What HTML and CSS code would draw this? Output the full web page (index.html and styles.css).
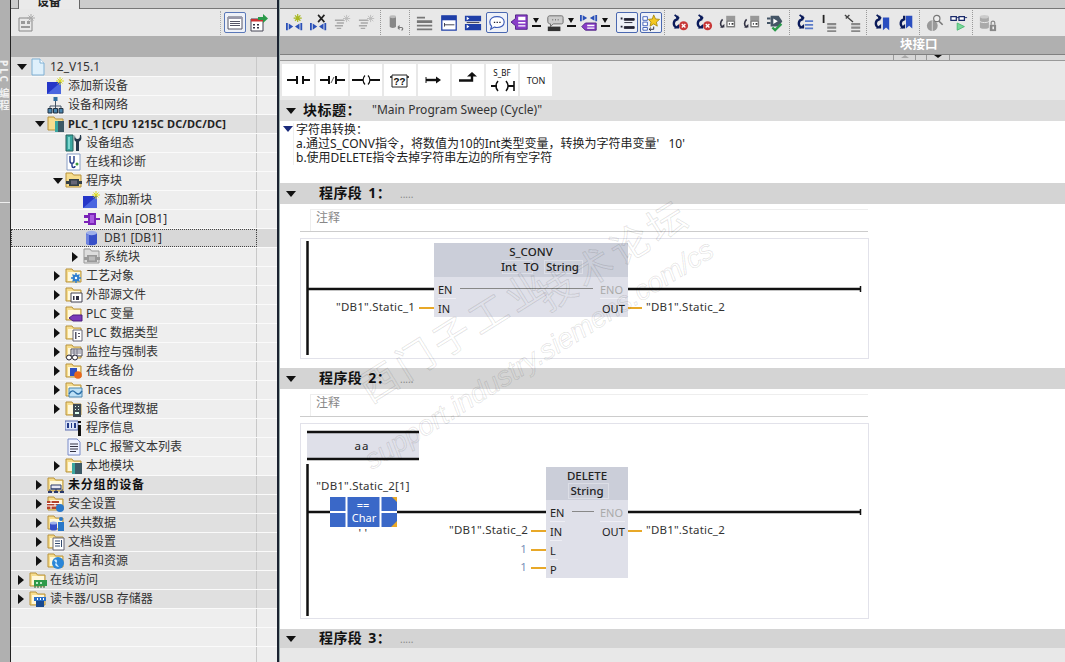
FILE: index.html
```html
<!DOCTYPE html>
<html lang="zh">
<head>
<meta charset="utf-8">
<title>TIA Portal</title>
<link rel="stylesheet" href="styles.css">
</head>
<body>
<svg class="defs" width="0" height="0">
  <!-- tree -->
  <symbol id="folder" viewBox="0 0 18 18"><path d="M1 2h6l1.500 2H16v11H1z" fill="#f6dd8e" stroke="#b8923a"/><path d="M3 5h12v9H3z" fill="#fff8dc"/></symbol>
  <symbol id="doc" viewBox="0 0 18 18"><path d="M3 1h8l4 4v12H3z" fill="#dff0fb" stroke="#7fb0d4"/><path d="M11 1v4h4" fill="#fff" stroke="#7fb0d4"/></symbol>
  <symbol id="newdev" viewBox="0 0 18 18"><path d="M0 5h14v12H0z" fill="#2536c8"/><path d="M0 17L14 5v12z" fill="#4a66e0"/><path d="M13 0v8M9 4h8M10.500 1.500l5 5M15.500 1.500l-5 5" stroke="#d8d820"/></symbol>
  <symbol id="network" viewBox="0 0 18 18"><path d="M6.500 1h4v4h-4z" fill="#2f6f9f"/><path d="M8.500 5v4M3 13v-3h11v3M8.500 9v4" stroke="#456" fill="none"/><path d="M1 12.500h4V17H1zM6.500 12.500h4V17h-4zM12 12.500h4V17h-4z" fill="#4a86b0" stroke="#234"/></symbol>
  <symbol id="plc" viewBox="0 0 18 18"><path d="M1 2h6l1.500 2H16v11H1z" fill="#f6dd8e" stroke="#b8923a"/><path d="M8 6h9v11H8z" fill="#3d5a66"/><path d="M8 6h3v11H8z" fill="#3aa7a0"/></symbol>
  <symbol id="devcfg" viewBox="0 0 18 18"><path d="M1 1h7v16H1z" fill="#3aa7a0" stroke="#24605c"/><path d="M3 3h2v12H3z" fill="#7fd8d0"/><path d="M10 1c0 3 1 4 2.500 4S15 4 15 1l1 0c1 4 0 6-2 6.500V17h-3V7.500C9 7 9 4 10 1z" fill="#24384a"/></symbol>
  <symbol id="diag" viewBox="0 0 18 18"><path d="M2 1h13v16H2z" fill="#fff" stroke="#8aa0c8"/><path d="M5 3v5c0 3 4 3 4 0V3M7 11v2c0 2 3 2 3 0" fill="none" stroke="#223a88" stroke-width="1.400"/><circle cx="12" cy="11" r="1.500" fill="#3a9a3a"/></symbol>
  <symbol id="blocks" viewBox="0 0 18 18"><path d="M1 1h6l1.500 2H16v12H1z" fill="#f6dd8e" stroke="#b8923a"/><path d="M1 9h3V7h10v2h3v3h-3v2H4v-2H1z" fill="#333f48"/><path d="M6 8.500h6v4H6z" fill="#667"/></symbol>
  <symbol id="sysblocks" viewBox="0 0 18 18"><path d="M1 1h6l1.500 2H16v12H1z" fill="#ddd" stroke="#999"/><path d="M1 9h3V7h10v2h3v3h-3v2H4v-2H1z" fill="#999"/><path d="M6 8.500h6v4H6z" fill="#bbb"/></symbol>
  <symbol id="ob" viewBox="0 0 18 18"><path d="M1 5h4V3h8v5h4v2h-4v5H5v-2H1v-2h4V8H1z" fill="#7a22b8"/><path d="M7 5h4v8H7z" fill="#a95be0"/></symbol>
  <symbol id="db" viewBox="0 0 18 18"><path d="M3 4v10c0 3 11 3 11 0V4z" fill="#3850c8"/><ellipse cx="8.500" cy="4" rx="5.500" ry="2.200" fill="#9fb0ea"/><path d="M3 5v9c0 1 1 2 3 2V6z" fill="#6f84e0"/></symbol>
  <symbol id="tech" viewBox="0 0 18 18"><use href="#folder"/><circle cx="11" cy="11" r="3.500" fill="#2f7fd0"/><path d="M11 6v10M6 11h10M7.500 7.500l7 7M14.500 7.500l-7 7" stroke="#2f7fd0" stroke-width="1.400"/><circle cx="11" cy="11" r="1.200" fill="#fff"/></symbol>
  <symbol id="ext" viewBox="0 0 18 18"><use href="#folder"/><path d="M6 7h11v9H6z" fill="#fff" stroke="#445"/><path d="M8 10h1.500v4H8zM11 10h3v4h-3z" fill="#334"/></symbol>
  <symbol id="tags" viewBox="0 0 18 18"><use href="#folder"/><path d="M4 13l4-3h9v6H8z" fill="#7a3ab8" stroke="#4a1f80"/></symbol>
  <symbol id="types" viewBox="0 0 18 18"><use href="#folder"/><path d="M8 6h9v11H8z" fill="#fff" stroke="#667"/><path d="M10 8h1.500v7H10zM13 9h2v1h-2zM13 12h2v1h-2z" fill="#556"/></symbol>
  <symbol id="watch" viewBox="0 0 18 18"><use href="#folder"/><path d="M6 6h11v7H6z" fill="#fff" stroke="#445"/><path d="M7 8h9M7 10h9M9 6v7M12 6v7" stroke="#778"/><circle cx="4" cy="14.500" r="2.500" fill="#fff" stroke="#223"/><circle cx="10" cy="14.500" r="2.500" fill="#fff" stroke="#223"/></symbol>
  <symbol id="backup" viewBox="0 0 18 18"><use href="#folder"/><path d="M5 6h7v8H5z" fill="#2f4fc0"/><circle cx="13" cy="13" r="3.800" fill="#e8671c"/></symbol>
  <symbol id="traces" viewBox="0 0 18 18"><use href="#folder"/><path d="M4 7h13v9H4z" fill="#bde0f5" stroke="#4a86b0"/><path d="M4 13c3-5 5-3 7-1s4 1 6-2" fill="none" stroke="#2c6fa8" stroke-width="1.400"/></symbol>
  <symbol id="proxy" viewBox="0 0 18 18"><use href="#folder"/><path d="M8 4h8v13H8z" fill="#3f4a52"/><path d="M10 6h1v1h-1zM13 6h1v1h-1zM10 9h1v1h-1zM13 9h1v1h-1zM10 12h4v2h-4z" fill="#dfe"/></symbol>
  <symbol id="info" viewBox="0 0 18 18"><path d="M0 2h13v9H0z" fill="#dbe4f8" stroke="#5a6cb0"/><path d="M2 4h2v5H2zM6 4h1v5H6zM9 4h2v5H9z" fill="#223a88"/><path d="M13 2h3v2h-3zM13 6h3v11h-3z" fill="#111"/></symbol>
  <symbol id="list" viewBox="0 0 18 18"><path d="M3 1h9l3 3v13H3z" fill="#eef2ff" stroke="#7a8cc8"/><path d="M5 6h8M5 8.500h8M5 11h8M5 13.500h6" stroke="#334"/></symbol>
  <symbol id="local" viewBox="0 0 18 18"><use href="#folder"/><path d="M7 6h10v11H7z" fill="#3d5a66"/><path d="M7 6h3v11H7z" fill="#3aa7a0"/></symbol>
  <symbol id="ungrouped" viewBox="0 0 18 18"><use href="#folder"/><path d="M4 9h10v4H4z" fill="#e8e8f4" stroke="#2a3a6a"/><path d="M4 13h10M3 13v3M9 13v3M15 13v3" stroke="#2a3a6a"/><path d="M1 15h4v2H1zM7 15h4v2H7zM13 15h4v2h-4z" fill="#2a3a6a"/></symbol>
  <symbol id="security" viewBox="0 0 18 18"><use href="#folder"/><path d="M0 6h12v8H0z" fill="#b5432c"/><path d="M0 8.500h12M0 11h12M4 6v2.500M8 8.500V11M4 11v3" stroke="#fff"/><circle cx="13" cy="13" r="4" fill="#2a78c8"/></symbol>
  <symbol id="common" viewBox="0 0 18 18"><use href="#folder"/><path d="M3 9v6c0 2 7 2 7 0V9z" fill="#3850c8"/><ellipse cx="6.500" cy="9" rx="3.500" ry="1.500" fill="#9fb0ea"/><circle cx="14" cy="5" r="2" fill="#2a78c8"/><path d="M11 8h6v9h-6z" fill="#2a78c8"/></symbol>
  <symbol id="docset" viewBox="0 0 18 18"><use href="#folder"/><path d="M6 5h11v12H6z" fill="#fff" stroke="#667"/><path d="M8 8h5M8 10.500h5M8 13h5M14.500 7v7" stroke="#334a70"/></symbol>
  <symbol id="lang" viewBox="0 0 18 18"><use href="#folder"/><circle cx="11" cy="11" r="6" fill="#2a86d8"/><path d="M7 8c3-2 4 2 2 3s0 4 3 4" fill="#cfeaff"/></symbol>
  <symbol id="online" viewBox="0 0 18 18"><use href="#folder"/><path d="M5 9h13v6H5z" fill="#2f9a4a"/><path d="M6 15v2M9 15v2M12 15v2M15 15v2" stroke="#1f6a30"/><path d="M7 11h2v2H7zM11 11h2v2h-2z" fill="#bfe8c8"/></symbol>
  <symbol id="reader" viewBox="0 0 18 18"><use href="#folder"/><path d="M5 7h12v4H5z" fill="#2a6fc8"/><path d="M7 11h8v6H7z" fill="#1a4a90"/><path d="M8 8h1v2H8zM11 8h1v2h-1zM14 8h1v2h-1z" fill="#fff"/></symbol>
  <symbol id="addgear" viewBox="0 0 18 18"><path d="M1 4h13v13H1z" fill="#e8e8e8" stroke="#888"/><path d="M3 7h4v3H3zM9 7h3v3H9zM3 12h9v2H3z" fill="#999"/><path d="M13 0v8M9 4h8M10.500 1.500l5 5M15.500 1.500l-5 5" stroke="#aaa"/></symbol>
  <symbol id="listview" viewBox="0 0 18 18"><path d="M2 3h14v12H2z" fill="#fff" stroke="#556"/><path d="M2 3h14v2H2z" fill="#99a"/><path d="M4 7.500h10M4 9.500h10M4 11.500h10" stroke="#556"/></symbol>
  <symbol id="export" viewBox="0 0 18 18"><path d="M1 5h12v12H1z" fill="#fff" stroke="#445"/><path d="M1 5h12v2.500H1z" fill="#c33"/><path d="M3 10h2v1.500H3zM7 10h2v1.500H7zM3 13h2v1.500H3zM7 13h2v1.500H7z" fill="#334"/><path d="M8 3h5V0l5 4.500L13 9V6H8z" fill="#2a9a4a"/></symbol>
  <!-- toolbar -->
  <symbol id="kn" viewBox="0 0 20 20"><path d="M1 10v8M17 10v8" stroke="#2a50b8" stroke-width="2"/><path d="M3 10.500l5 3.500-5 3.500zM15 10.500l-5 3.500 5 3.500z" fill="#2a50b8"/></symbol>
  <symbol id="t1" viewBox="0 0 20 20"><use href="#kn"/><path d="M13 0v9M8.500 4.500h9M10 1.500l6 6M16 1.500l-6 6" stroke="#a8b820" stroke-width="1.300"/></symbol>
  <symbol id="t2" viewBox="0 0 20 20"><use href="#kn"/><path d="M9 1l7 8M16 1l-7 8" stroke="#222" stroke-width="1.800"/></symbol>
  <symbol id="t3" viewBox="0 0 20 20"><path d="M1 7h10M3 10h8M1 13h9M3 16h5" stroke="#a8a8a8" stroke-width="1.600"/><path d="M14 1v8M10 5h8M11 2l6 6M17 2l-6 6" stroke="#bbb"/></symbol>
  <symbol id="t5" viewBox="0 0 20 20"><path d="M3 3v11c0 2 7 2 7 0V3z" fill="#888"/><ellipse cx="6.500" cy="3" rx="3.500" ry="1.600" fill="#bbb"/><path d="M12 15h4c2 0 2 3 0 3M12 15l2-2M12 15l2 2" fill="none" stroke="#777" stroke-width="1.300"/></symbol>
  <symbol id="t6" viewBox="0 0 20 20"><path d="M1 3h9v2H1zM1 7h17v3H1zM1 12h17v2H1zM1 16h17v2H1z" fill="#777"/></symbol>
  <symbol id="t7" viewBox="0 0 20 20"><path d="M2 2h16v16H2z" fill="#fff" stroke="#1f3fa8" stroke-width="1.400"/><path d="M2 2h16v5H2z" fill="#1f3fa8"/><path d="M5 12h11M5 10v4" stroke="#334"/></symbol>
  <symbol id="t8" viewBox="0 0 20 20"><path d="M1 2h18v6H1zM1 11h18v7H1z" fill="#1f3fa8"/><path d="M3 9.500h14" stroke="#334"/><path d="M3 3l3 2-3 2zM3 12l3 2-3 2z" fill="#fff"/></symbol>
  <symbol id="t9" viewBox="0 0 20 20"><path d="M2 9c0-4 4-6 8-6s8 2 8 6-4 6-8 6c-1 0-2 0-3-.5L3 17l1-3.500C2.700 12.500 2 11 2 9z" fill="#fff" stroke="#3a5ab8" stroke-width="1.300"/><path d="M6.500 8.500h1.500V10H6.500zM9.500 8.500H11V10H9.500zM12.500 8.500H14V10h-1.500z" fill="#223"/></symbol>
  <symbol id="t10" viewBox="0 0 20 20"><path d="M0 9l5-4V1h13v16H5v-4z" fill="#8a3ec8" stroke="#4a1f80"/><path d="M8 3h8v4H8zM8 9h8v1.500H8zM8 12.500h8V14H8z" fill="#fff"/></symbol>
  <symbol id="t11" viewBox="0 0 20 20"><path d="M4 2h13c2 0 2 1 2 3v4c0 2-1 2-3 2H8l-3 3v-3C3 11 2 10 2 8V4c0-1 1-2 2-2z" fill="#ccc" stroke="#666"/><path d="M2 14h14v5H2z" fill="#333"/><path d="M7 6h1v1H7zM10 6h1v1h-1zM13 6h1v1h-1z" fill="#222"/></symbol>
  <symbol id="t12" viewBox="0 0 20 20"><path d="M1 1v7M18 1v7" stroke="#2a50b8" stroke-width="2"/><path d="M3 1.500l5 3-5 3zM16 1.500l-5 3 5 3z" fill="#2a50b8"/><path d="M2 14l4-4h12v8H6z" fill="#8a3ec8" stroke="#4a1f80"/><path d="M8 12h8v1.500H8zM8 15h8v1.500H8z" fill="#fff"/></symbol>
  <symbol id="t13" viewBox="0 0 20 20"><path d="M3 4h2v2H3zM3 13h2v2H3z" fill="#223"/><path d="M7 5h11v2H7zM7 9.500h9M7 14h11v2H7z" fill="#223" stroke="#223"/></symbol>
  <symbol id="t14" viewBox="0 0 20 20"><path d="M1 3h5v4H1zM1 9h5v4H1zM1 15h5v3H1z" fill="#fff" stroke="#3a5ab8"/><path d="M13 1l2 4.500 4.500.5-3.500 3 1 4.500-4-2.500-4 2.500 1-4.500-3-3 4.500-.5z" fill="#f6c820" stroke="#a88a10"/><path d="M13 14v3H8M10 15l-2 2 2 2" fill="none" stroke="#223"/></symbol>
  <symbol id="cur" viewBox="0 0 20 20"><path d="M7 2v4C2 7 2 13 6 15" fill="none" stroke="#0a1a5a" stroke-width="2.600"/><path d="M3 16h6v-5z" fill="#0a1a5a"/><path d="M4 1l5 4" stroke="#0a1a5a" stroke-width="2"/></symbol>
  <symbol id="t15" viewBox="0 0 20 20"><use href="#cur"/><circle cx="14" cy="13" r="5" fill="#c83838"/><path d="M12 11l4 4M16 11l-4 4" stroke="#fff" stroke-width="1.500"/></symbol>
  <symbol id="t17" viewBox="0 0 20 20"><path d="M4 6C1 9 1 13 4 15" fill="none" stroke="#334" stroke-width="1.800"/><path d="M1 15h5v-4z" fill="#334"/><path d="M8 2h10v13H8z" fill="#999"/><path d="M9 8h8v6H9z" fill="#fff" stroke="#666"/><path d="M11 10h1v2h-1zM14 10h2v2h-2z" fill="#333"/></symbol>
  <symbol id="t19" viewBox="0 0 20 20"><path d="M4 2h9l4 6-4 6H4z" fill="#445566"/><path d="M7 5l5 3-5 3z" fill="#fff"/><path d="M0 5h4M0 10h4" stroke="#445566" stroke-width="2"/><path d="M6 15l3 3 7-7" fill="none" stroke="#2a9a4a" stroke-width="2.600"/></symbol>
  <symbol id="t20" viewBox="0 0 20 20"><use href="#cur"/><path d="M10 7h9v2h-9zM10 11h9v2h-9zM10 15h9v2h-9z" fill="#5a7ac8"/></symbol>
  <symbol id="t21" viewBox="0 0 20 20"><path d="M3 1h2v9H3z" fill="#222"/><path d="M8 10h10v2.500H8zM8 14h10v2.500H8zM8 18h10V20H8z" fill="#888"/></symbol>
  <symbol id="t22" viewBox="0 0 20 20"><path d="M1 1l9 8M2 5l4-4" stroke="#444" stroke-width="1.500"/><path d="M8 10h10v2.500H8zM8 14h10v2.500H8zM8 18h10V20H8z" fill="#888"/></symbol>
  <symbol id="t23" viewBox="0 0 20 20"><use href="#cur"/><path d="M11 4h7v14l-3.500-3L11 18z" fill="#2a4ec0"/></symbol>
  <symbol id="t24" viewBox="0 0 20 20"><path d="M12 2v4c5 1 5 7 1 9" fill="none" transform="matrix(-1 0 0 1 20 0)" stroke="#0a1a5a" stroke-width="2.600"/><path d="M3 16h6v-5z" fill="#0a1a5a"/><path d="M10 2h7v14l-3.500-3L10 16z" fill="#2a4ec0"/></symbol>
  <symbol id="t25" viewBox="0 0 20 20"><circle cx="7" cy="13" r="6" fill="#999"/><path d="M7 7v12" stroke="#ddd"/><circle cx="12" cy="5" r="3.500" fill="#eee" stroke="#777" stroke-width="1.300"/><path d="M14.500 8l4 4" stroke="#777" stroke-width="1.800"/></symbol>
  <symbol id="t26" viewBox="0 0 20 20"><path d="M1 3h6v4H1zM10 3h6v4h-6z" fill="#fff" stroke="#1a2a6a" stroke-width="1.400"/><path d="M7 4h3M16 4h3" stroke="#1a2a6a"/><path d="M8 10l8 4-8 4z" fill="#7ad89a" stroke="#4ab870"/></symbol>
  <symbol id="t27" viewBox="0 0 20 20"><path d="M1 3v12c0 2 10 2 10 0V3z" fill="#aaa"/><ellipse cx="6" cy="3" rx="5" ry="2" fill="#ccc"/><path d="M1 8c0 2 10 2 10 0" fill="none" stroke="#eee"/><path d="M12 12h7v7h-7z" fill="#888"/><path d="M13.500 12V9.500c0-2 4-2 4 0V12" fill="none" stroke="#888" stroke-width="1.300"/><path d="M15 14h1.500v3H15z" fill="#fff"/></symbol>
</svg>

<div class="app">
  <aside class="rail">
    <span class="rail-text">PLC 编程</span>
    <span class="rail-mark"></span>
  </aside>

  <nav class="pane">
    <div class="pane-tabs"><div class="tab">设备</div></div>
    <div class="pane-tool">
      <svg class="ic tool-first"><use href="#addgear"/></svg>
      <span class="grow"></span>
      <span class="dots"></span>
      <span class="active-btn"><svg class="ic"><use href="#listview"/></svg></span>
      <svg class="ic"><use href="#export"/></svg>
    </div>
    <div class="pane-band"></div>
    <ul class="tree">
      <li class="row top l0"><span class="cell"><i class="arrow open"></i><svg class="ic"><use href="#doc"/></svg><span>12_V15.1</span></span></li>
      <li class="row l1"><span class="cell"><i class="arrow none"></i><svg class="ic"><use href="#newdev"/></svg><span>添加新设备</span></span></li>
      <li class="row l1"><span class="cell"><i class="arrow none"></i><svg class="ic"><use href="#network"/></svg><span>设备和网络</span></span></li>
      <li class="row top l1"><span class="cell"><i class="arrow open"></i><svg class="ic"><use href="#plc"/></svg><b class="plc">PLC_1 [CPU 1215C DC/DC/DC]</b></span></li>
      <li class="row l2"><span class="cell"><i class="arrow none"></i><svg class="ic"><use href="#devcfg"/></svg><span>设备组态</span></span></li>
      <li class="row l2"><span class="cell"><i class="arrow none"></i><svg class="ic"><use href="#diag"/></svg><span>在线和诊断</span></span></li>
      <li class="row l2"><span class="cell"><i class="arrow open"></i><svg class="ic"><use href="#blocks"/></svg><span>程序块</span></span></li>
      <li class="row l3"><span class="cell"><i class="arrow none"></i><svg class="ic"><use href="#newdev"/></svg><span>添加新块</span></span></li>
      <li class="row l3"><span class="cell"><i class="arrow none"></i><svg class="ic"><use href="#ob"/></svg><span>Main [OB1]</span></span></li>
      <li class="row l3 selected"><span class="cell"><i class="arrow none"></i><svg class="ic"><use href="#db"/></svg><span>DB1 [DB1]</span></span></li>
      <li class="row l3"><span class="cell"><i class="arrow"></i><svg class="ic"><use href="#sysblocks"/></svg><span>系统块</span></span></li>
      <li class="row l2"><span class="cell"><i class="arrow"></i><svg class="ic"><use href="#tech"/></svg><span>工艺对象</span></span></li>
      <li class="row l2"><span class="cell"><i class="arrow"></i><svg class="ic"><use href="#ext"/></svg><span>外部源文件</span></span></li>
      <li class="row l2"><span class="cell"><i class="arrow"></i><svg class="ic"><use href="#tags"/></svg><span>PLC 变量</span></span></li>
      <li class="row l2"><span class="cell"><i class="arrow"></i><svg class="ic"><use href="#types"/></svg><span>PLC 数据类型</span></span></li>
      <li class="row l2"><span class="cell"><i class="arrow"></i><svg class="ic"><use href="#watch"/></svg><span>监控与强制表</span></span></li>
      <li class="row l2"><span class="cell"><i class="arrow"></i><svg class="ic"><use href="#backup"/></svg><span>在线备份</span></span></li>
      <li class="row l2"><span class="cell"><i class="arrow"></i><svg class="ic"><use href="#traces"/></svg><span>Traces</span></span></li>
      <li class="row l2"><span class="cell"><i class="arrow"></i><svg class="ic"><use href="#proxy"/></svg><span>设备代理数据</span></span></li>
      <li class="row l2"><span class="cell"><i class="arrow none"></i><svg class="ic"><use href="#info"/></svg><span>程序信息</span></span></li>
      <li class="row l2"><span class="cell"><i class="arrow none"></i><svg class="ic"><use href="#list"/></svg><span>PLC 报警文本列表</span></span></li>
      <li class="row l2"><span class="cell"><i class="arrow"></i><svg class="ic"><use href="#local"/></svg><span>本地模块</span></span></li>
      <li class="row top l1"><span class="cell"><i class="arrow"></i><svg class="ic"><use href="#ungrouped"/></svg><b>未分组的设备</b></span></li>
      <li class="row top l1"><span class="cell"><i class="arrow"></i><svg class="ic"><use href="#security"/></svg><span>安全设置</span></span></li>
      <li class="row top l1"><span class="cell"><i class="arrow"></i><svg class="ic"><use href="#common"/></svg><span>公共数据</span></span></li>
      <li class="row top l1"><span class="cell"><i class="arrow"></i><svg class="ic"><use href="#docset"/></svg><span>文档设置</span></span></li>
      <li class="row top l1"><span class="cell"><i class="arrow"></i><svg class="ic"><use href="#lang"/></svg><span>语言和资源</span></span></li>
      <li class="row top l0"><span class="cell"><i class="arrow"></i><svg class="ic"><use href="#online"/></svg><span>在线访问</span></span></li>
      <li class="row top l0"><span class="cell"><i class="arrow"></i><svg class="ic"><use href="#reader"/></svg><span>读卡器/USB 存储器</span></span></li>
      <li class="row"><span class="cell"></span></li>
      <li class="row"><span class="cell"></span></li>
      <li class="row"><span class="cell"></span></li>
    </ul>
  </nav>

  <div class="divider"></div>

  <main class="editor">
    <div class="etop"></div>
    <div class="etool">
      <span class="tb"><svg class="ti"><use href="#t1"/></svg></span>
      <span class="tb"><svg class="ti"><use href="#t2"/></svg></span>
      <span class="tb"><svg class="ti"><use href="#t3"/></svg></span>
      <span class="tb"><svg class="ti"><use href="#t3"/></svg></span>
      <span class="sep"></span>
      <span class="tb"><svg class="ti"><use href="#t5"/></svg></span>
      <span class="sep"></span>
      <span class="tb"><svg class="ti"><use href="#t6"/></svg></span>
      <span class="tb"><svg class="ti"><use href="#t7"/></svg></span>
      <span class="tb"><svg class="ti"><use href="#t8"/></svg></span>
      <span class="tb on"><svg class="ti"><use href="#t9"/></svg></span>
      <span class="tb wide"><svg class="ti"><use href="#t10"/></svg><i class="down"></i></span>
      <span class="tb wide"><svg class="ti"><use href="#t11"/></svg><i class="down"></i></span>
      <span class="tb wide"><svg class="ti"><use href="#t12"/></svg><i class="down"></i></span>
      <span class="tb on after-wide"><svg class="ti"><use href="#t13"/></svg></span>
      <span class="tb on"><svg class="ti"><use href="#t14"/></svg></span>
      <span class="sep"></span>
      <span class="tb"><svg class="ti"><use href="#t15"/></svg></span>
      <span class="tb"><svg class="ti"><use href="#t15"/></svg></span>
      <span class="tb"><svg class="ti"><use href="#t17"/></svg></span>
      <span class="tb"><svg class="ti"><use href="#t17"/></svg></span>
      <span class="tb"><svg class="ti"><use href="#t19"/></svg></span>
      <span class="sep"></span>
      <span class="tb"><svg class="ti"><use href="#t20"/></svg></span>
      <span class="tb"><svg class="ti"><use href="#t21"/></svg></span>
      <span class="tb"><svg class="ti"><use href="#t22"/></svg></span>
      <span class="sep"></span>
      <span class="tb"><svg class="ti"><use href="#t23"/></svg></span>
      <span class="tb"><svg class="ti"><use href="#t24"/></svg></span>
      <span class="sep"></span>
      <span class="tb"><svg class="ti"><use href="#t25"/></svg></span>
      <span class="tb"><svg class="ti"><use href="#t26"/></svg></span>
      <span class="sep"></span>
      <span class="tb"><svg class="ti"><use href="#t27"/></svg></span>
    </div>
    <div class="iface"><span>块接口</span></div>
    <div class="ifsub"><span class="ftab up"></span><span class="ftab dn"></span></div>

    <div class="instr">
      <span class="ins"><svg class="insi" viewBox="0 0 30 30"><path d="M4 15h10M20 15h7" stroke="#111" stroke-width="2" fill="none"/><path d="M14 11v8M20 11v8" stroke="#111" stroke-width="2" fill="none"/></svg></span>
      <span class="ins"><svg class="insi" viewBox="0 0 30 30"><path d="M3 15h9M19 15h9M12 11v8M19 11v8" stroke="#111" stroke-width="2" fill="none"/><path d="M14 18l3-6" stroke="#555"/></svg></span>
      <span class="ins"><svg class="insi" viewBox="0 0 30 30"><path d="M1 15h11M19 15h10" stroke="#111" stroke-width="2"/><path d="M14 10.500c-2.500 2.500-2.500 6.500 0 9M17 10.500c2.500 2.500 2.500 6.500 0 9" stroke="#111" stroke-width="1.200" fill="none"/></svg></span>
      <span class="ins"><svg class="insi" viewBox="0 0 30 30"><path d="M7 10h15v12H7z" fill="#fff" stroke="#222"/><path d="M5 12h2M22 12h2" stroke="#111" stroke-width="1.400"/><text x="14.500" y="20" class="q">??</text></svg></span>
      <span class="ins"><svg class="insi" viewBox="0 0 30 30"><path d="M7 15h11" stroke="#111" stroke-width="2.400"/><path d="M7 12v6" stroke="#111"/><path d="M17 11.500l5 3.500-5 3.500z" fill="#111"/></svg></span>
      <span class="ins"><svg class="insi" viewBox="0 0 30 30"><path d="M6 15.500h13V11" stroke="#111" stroke-width="2.400" fill="none"/><path d="M14 11.500l5-4.500 5 4.500z" fill="#111"/></svg></span>
      <span class="ins"><svg class="insi" viewBox="0 0 30 30"><text x="15" y="11" class="sbf">S_BF</text><path d="M4 21h6M21 21h6" stroke="#111" stroke-width="2"/><path d="M27 16v10" stroke="#111" stroke-width="1.600"/><path d="M11 16c-2.500 3-2.500 7 0 10M19 16c2.500 3 2.500 7 0 10" stroke="#111" stroke-width="1.500" fill="none"/></svg></span>
      <span class="ins"><span class="ton">TON</span></span>
    </div>

    <header class="bt-head">
      <i class="arrow open"></i><b class="bt-title">块标题：</b><span class="bt-name">"Main Program Sweep (Cycle)"</span>
    </header>

    <section class="bt-comment">
      <i class="navy"></i>
      <div class="bt-text">
        <p>字符串转换：</p>
        <p>a.通过S_CONV指令，将数值为10的Int类型变量，转换为字符串变量'&nbsp;&nbsp;&nbsp;10'</p>
        <p>b.使用DELETE指令去掉字符串左边的所有空字符</p>
      </div>
    </section>

    <header class="net-head"><i class="arrow open"></i><b class="net-title">程序段 1：</b><span class="net-dots">.....</span></header>
    <section class="net net1">
      <div class="net-comment"><span>注释</span></div>
      <svg class="lad lad1" viewBox="300 238 569 121">
        <rect x="300.500" y="238.500" width="568" height="120" class="frame"/>
        <path d="M307.500 241v114" class="rail-l"/>
        <path d="M307 289h127M628 289h232" class="power"/>
        <path d="M860.500 286v6" class="tick"/>
        <rect x="434" y="243" width="194" height="34" class="bhead"/>
        <rect x="434" y="277" width="194" height="40" class="bbody"/>
        <rect x="502.500" y="260.500" width="30" height="13" class="tbox"/>
        <rect x="544.500" y="260.500" width="38" height="13" class="tbox"/>
        <text x="531" y="256" class="bname">S_CONV</text>
        <text x="540" y="271" class="bname wide-w">Int TO String</text>
        <text x="438" y="294" class="pin">EN</text>
        <path d="M460 288.500h133" class="thin"/>
        <text x="600" y="294" class="pin off">ENO</text>
        <text x="438" y="313" class="pin">IN</text>
        <text x="602" y="313" class="pin">OUT</text>
        <path d="M438 298.500h18M600 298.500h25" class="pinline"/>
        <path d="M419 308h15M628 308h14" class="wire"/>
        <text x="415" y="311" class="op end">"DB1".Static_1</text>
        <text x="646" y="311" class="op">"DB1".Static_2</text>
      </svg>
    </section>

    <header class="net-head"><i class="arrow open"></i><b class="net-title">程序段 2：</b><span class="net-dots">.....</span></header>
    <section class="net net2">
      <div class="net-comment"><span>注释</span></div>
      <svg class="lad lad2" viewBox="300 423 569 196">
        <rect x="300.500" y="423.500" width="568" height="195" class="frame"/>
        <rect x="307" y="431" width="112" height="29" class="bbody"/>
        <path d="M307 432h112M307 459h112" class="power"/>
        <text x="362" y="450" class="bname spaced">aa</text>
        <path d="M307.500 464v152" class="rail-l"/>
        <path d="M307 512h239M628 512h232" class="power"/>
        <path d="M860.500 509v6" class="tick"/>
        <text x="363" y="490" class="op mid">"DB1".Static_2[1]</text>
        <rect x="330" y="497" width="67" height="30" class="cmp"/>
        <path d="M346.500 497v30M380.500 497v30M330 512h16M381 512h16" class="cmp-line"/>
        <path d="M392 497h5v5zM397 527h-6l6-6z" class="cmp-mark"/>
        <text x="363" y="509" class="cmp-t">==</text>
        <text x="364" y="522" class="cmp-t">Char</text>
        <text x="363" y="537" class="op mid">' '</text>
        <rect x="546" y="467" width="82" height="33" class="bhead"/>
        <rect x="546" y="500" width="82" height="78" class="bbody"/>
        <rect x="568.500" y="483.500" width="40" height="15" class="tbox"/>
        <text x="587" y="480" class="bname">DELETE</text>
        <text x="587" y="495" class="bname">String</text>
        <text x="550" y="517" class="pin">EN</text>
        <path d="M572 511.500h22" class="thin"/>
        <text x="600" y="517" class="pin off">ENO</text>
        <text x="550" y="536" class="pin">IN</text>
        <text x="602" y="536" class="pin">OUT</text>
        <text x="550" y="555" class="pin">L</text>
        <text x="550" y="574" class="pin">P</text>
        <path d="M550 521.500h15M550 540.500h12M550 559.500h8M600 521.500h25" class="pinline"/>
        <path d="M531 531h15M531 550h15M531 568h15M628 531h14" class="wire"/>
        <text x="528" y="534" class="op end">"DB1".Static_2</text>
        <text x="646" y="534" class="op">"DB1".Static_2</text>
        <text x="527" y="553" class="op end num">1</text>
        <text x="527" y="571" class="op end num">1</text>
      </svg>
    </section>

    <header class="net-head short"><i class="arrow open"></i><b class="net-title">程序段 3：</b><span class="net-dots">.....</span></header>
    <div class="editor-rest"></div>

    <svg class="watermark" viewBox="0 0 785 662">
      <text transform="translate(90 404) rotate(-32)" class="wm-cn">西门子工业</text>
      <text transform="translate(268 312) rotate(-32)" class="wm-cn">技术论坛</text>
      <text transform="translate(92 470) rotate(-32)" class="wm-en">support.industry.siemens.com/cs</text>
    </svg>
  </main>
</div>
</body>
</html>
```

FILE: styles.css
```css
* { box-sizing: border-box; }
html, body { margin: 0; padding: 0; height: 100%; overflow: hidden; }
body { font: 12px/1.2 "Noto Sans", "Noto Sans CJK SC", sans-serif; color: #222; background: #e8e8e8; }
.defs { position: absolute; }
.app { display: flex; width: 1065px; height: 662px; overflow: hidden; }

/* left rail */
.rail { width: 11px; flex: none; background: #b0b0b0; border-right: 1px solid #222; padding-top: 60px; display: flex; flex-direction: column; overflow: hidden; }
.rail-text { writing-mode: vertical-rl; color: #f2f2f2; font-size: 10px; font-weight: 700; height: 70px; margin-left: -3px; line-height: 12px; letter-spacing: 2px; }
.rail-mark { height: 1px; background: #eee; margin-top: 72px; }

/* project tree */
.pane { width: 266px; flex: none; background: #eee; display: flex; flex-direction: column; }
.pane-tabs { height: 9px; background: #ccc; border-bottom: 1px solid #777; padding-left: 7px; }
.tab { width: 62px; height: 9px; background: #eaeaea; border: 1px solid #666; border-top: 0; border-bottom: 0; font-size: 12px; font-weight: 700; margin-top: 0; padding-left: 18px; overflow: hidden; line-height: 4px; }
.pane-tool { height: 27px; background: #e8e8e8; display: flex; align-items: center; padding: 0 9px 0 7px; }
.grow { flex: 1; }
.dots { width: 1px; height: 24px; border-left: 1px dotted #aaa; margin-right: 3px; }
.active-btn { width: 22px; height: 21px; background: #eef1f8; border: 1px solid #5a78b8; border-radius: 2px; display: flex; align-items: center; justify-content: center; margin-right: 4px; }
.ic { width: 18px; height: 18px; flex: none; }
.pane-band { height: 21px; background: #b0b0b0; }
.tree { list-style: none; margin: 0; padding: 0; flex: 1; overflow: hidden; }
.row { height: 19px; display: flex; border-bottom: 1px solid #fafafa; background: #eee; color: #333; }
.row:first-child { height: 20px; }
.row.top { background: #e0e0e0; }
.cell { width: 246px; border-right: 1px solid #c8c8c8; display: flex; align-items: center; white-space: nowrap; font-size: 12px; line-height: 18px; }
.l0 .cell { padding-left: 6px; }
.l1 .cell { padding-left: 24px; }
.l2 .cell { padding-left: 42px; }
.l3 .cell { padding-left: 60px; }
.cell .ic { margin: 0 3px 0 1px; }
.cell b { font-weight: 700; color: #111; letter-spacing: .8px; }
.cell .plc { font-size: 11px; letter-spacing: .1px; color: #222; }
.row.selected { background: #d8d8d8; }
.row.selected .cell { outline: 1px dotted #444; outline-offset: -1px; }

.arrow { display: block; flex: none; width: 6px; height: 10px; margin: 0 4px 0 1px; border-style: solid; border-width: 5px 0 5px 6px; border-color: transparent transparent transparent #111; }
.arrow.open { width: 10px; height: 6px; border-width: 6px 5px 0 5px; border-color: #111 transparent transparent transparent; margin: 0 1px 0 0; }
.arrow.none { border: 0; width: 11px; margin: 0; }

.divider { width: 3px; flex: none; background: #1a2230; border-right: 1px solid #9aa; }

/* editor */
.editor { position: relative; width: 785px; flex: none; display: flex; flex-direction: column; background: #fff; overflow: hidden; }
.etop { height: 9px; background: #ccc; border-bottom: 1px solid #777; flex: none; }
.etool { height: 27px; flex: none; background: #e8e8e8; display: flex; align-items: center; padding-left: 3px; }
.tb { width: 24px; height: 24px; flex: none; display: flex; align-items: center; justify-content: center; }
.tb.on { width: 22px; height: 21px; margin: 0 1px; background: #eef1f8; border: 1px solid #4a68b0; border-radius: 2px; }
.tb.wide { width: 34.5px; justify-content: flex-start; padding-left: 2px; }
.tb.on.after-wide { margin-left: 3px; }
.ti { width: 18px; height: 18px; flex: none; }
.sep { width: 1px; height: 25px; flex: none; margin: 0 3px 0 1px; border-left: 1px dotted #999; }
.down { width: 9px; height: 9px; flex: none; margin-left: 3px; border-bottom: 2px solid #111; position: relative; }
.down::before { content: ""; position: absolute; left: 1px; top: 0; border: 3.500px solid transparent; border-top: 5px solid #111; border-bottom: 0; }
.iface { height: 19px; flex: none; background: #b0b0b0; border-bottom: 1px solid #808080; padding-left: 620px; color: #fff; font-weight: 700; font-size: 12.500px; line-height: 18px; }
.ifsub { height: 6px; flex: none; background: #d8d8d8; border-bottom: 1px solid #999; box-shadow: 0 1px 0 #fff; display: flex; padding-left: 613px; overflow: hidden; }
.ftab { width: 23px; height: 6px; border: 1px solid #999; border-top: 0; position: relative; }
.ftab.dn { width: 24px; margin-left: 10px; }
.ftab::before { content: ""; position: absolute; left: 7px; top: 0; border: 4px solid transparent; border-top: 0; border-bottom: 3px solid #aaa; }
.ftab.dn::before { border-bottom: 0; border-top: 3px solid #111; }
.instr { height: 39px; flex: none; background: #e8e8e8; display: flex; gap: 2px; padding: 3px 0 3px 2px; }
.ins { width: 32px; height: 32px; background: #fff; display: flex; align-items: center; justify-content: center; }
.insi { width: 30px; height: 30px; }
.q { font: 700 10px "Liberation Mono", monospace; text-anchor: middle; fill: #111; }
.sbf { font: 8px "Noto Sans", sans-serif; text-anchor: middle; fill: #111; }
.ton { font: 9px "Noto Sans", sans-serif; color: #222; }
.bt-head { height: 21px; flex: none; background: #dcdcdc; display: flex; align-items: center; padding-left: 6px; }
.bt-head .arrow.open { margin-right: 7px; }
.bt-title { font-size: 14px; width: 69px; color: #111; letter-spacing: .5px; }
.bt-name { font-size: 12px; color: #333; }
.bt-comment { height: 62px; flex: none; position: relative; padding: 2px 0 0 13px; }
.navy { position: absolute; left: 3px; top: 5px; border-style: solid; border-width: 6px 5px 0 5px; border-color: #1a2a7a transparent transparent transparent; }
.bt-text { border-left: 1px solid #eee; padding-left: 2px; color: #222; }
.bt-text p { margin: 0; height: 14px; font-size: 12px; line-height: 14px; white-space: nowrap; }
.net-head { height: 21px; flex: none; background: #d4d4d4; display: flex; align-items: center; padding-left: 6px; }
.net-head.short { height: 19px; }
.net-head .arrow.open { margin-right: 23px; }
.net-title { font-size: 14px; width: 81px; color: #111; word-spacing: 2px; letter-spacing: .4px; }
.net-dots { font-size: 10px; color: #888; }
.net { flex: none; }
.net1 { height: 164px; }
.net2 { height: 240px; }
.net-comment { height: 28px; margin: 0 197px 0 20px; border-bottom: 1px solid #ccc; padding-top: 5px; }
.net-comment span { display: block; height: 22px; border-top: 1px solid #eee; border-left: 1px solid #eee; margin-left: 10px; padding: 1px 0 0 5px; color: #888; line-height: 14px; }
.lad { display: block; margin: 6px 0 0 20px; width: 569px; }
.lad1 { height: 121px; }
.lad2 { height: 196px; }
.frame { fill: #fff; stroke: #e2e2ea; }
.rail-l { stroke: #111; stroke-width: 2.500; fill: none; }
.power { stroke: #111; stroke-width: 2.500; fill: none; }
.tick { stroke: #111; stroke-width: 1.500; }
.bhead { fill: #cbced9; }
.bbody { fill: #dfe0e9; }
.tbox { fill: none; stroke: #dcdee6; }
.pinline { stroke: #eeeef4; fill: none; }
.bname { font: 500 11.500px "Noto Sans", sans-serif; text-anchor: middle; fill: #222; }
.wide-w { word-spacing: 4px; }
.spaced { letter-spacing: 1px; font-weight: 400; }
.pin { font: 11px "Noto Sans", sans-serif; fill: #222; }
.pin.off { fill: #aaa; }
.thin { stroke: #888; fill: none; }
.wire { stroke: #e8a828; stroke-width: 2; fill: none; }
.op { font: 11.500px "Noto Sans", sans-serif; letter-spacing: .2px; fill: #333; }
.end { text-anchor: end; }
.mid { text-anchor: middle; }
.num { fill: #7a90b8; }
.cmp { fill: #3a68c8; }
.cmp-line { stroke: #fff; stroke-width: 2; fill: none; }
.cmp-mark { fill: #e8a828; }
.cmp-t { font: 11px "Noto Sans", sans-serif; fill: #fff; text-anchor: middle; }
.editor-rest { flex: 1; background: #e8e8e8; }
.watermark { position: absolute; left: 0; top: 0; width: 785px; height: 662px; pointer-events: none; }
.wm-cn { font: 38px "Noto Sans CJK SC", sans-serif; letter-spacing: 5px; fill: none; stroke: #000; stroke-opacity: .11; }
.wm-en { font: italic 28px "Liberation Sans", sans-serif; fill: none; stroke: #000; stroke-opacity: .1; }
```
